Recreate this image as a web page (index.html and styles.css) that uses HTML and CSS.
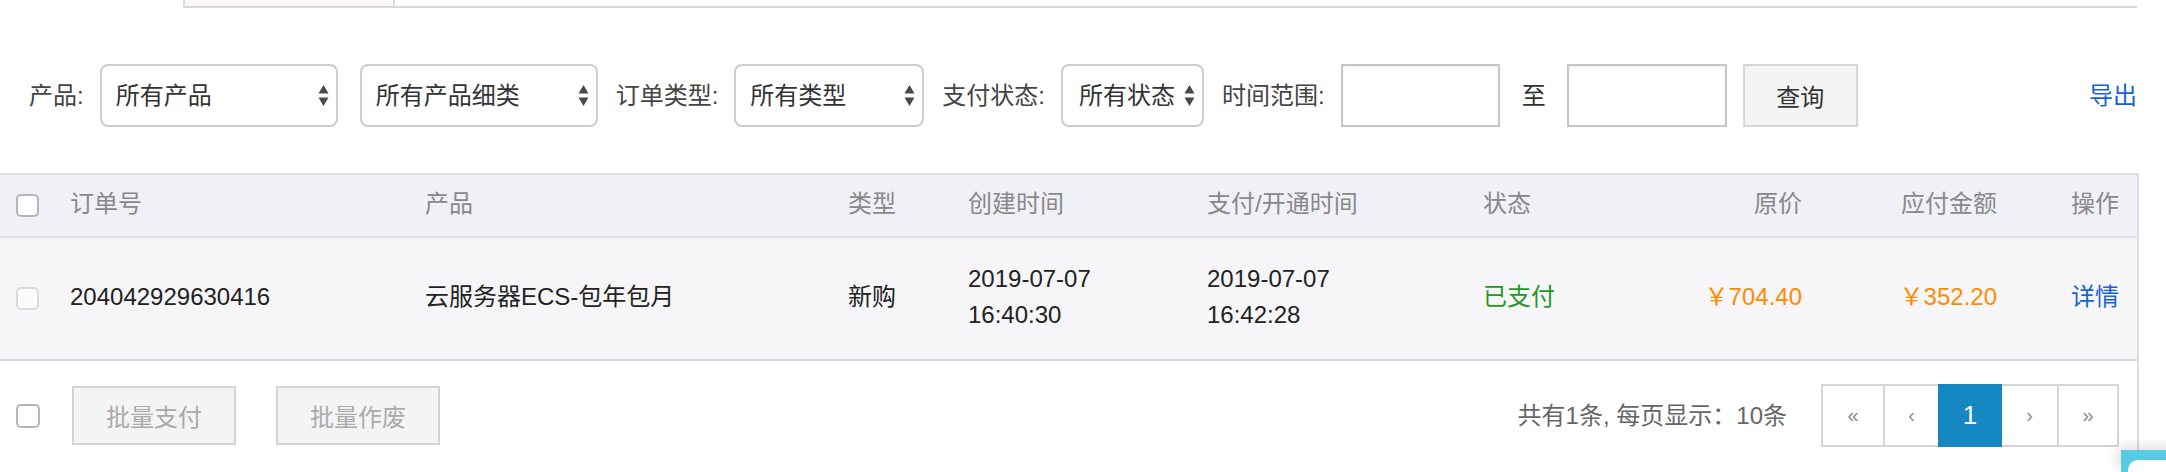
FILE: index.html
```html
<!DOCTYPE html>
<html lang="zh-CN">
<head>
<meta charset="utf-8">
<title>订单管理</title>
<link rel="stylesheet" href="styles.css">
</head>
<body>
<div class="topbox"><div class="topbox-cell"></div><div class="topbox-rest"></div></div>

<form class="filters">
  <span class="flabel">产品:</span>
  <div class="sel sel-product sel-first"><span>所有产品</span><svg class="arrows" viewBox="0 0 11 23" width="11" height="23"><path d="M5.5 1 L10.5 9.5 H0.5 Z M0.5 13.5 H10.5 L5.5 22 Z"/></svg></div>
  <div class="sel sel-product"><span>所有产品细类</span><svg class="arrows" viewBox="0 0 11 23" width="11" height="23"><path d="M5.5 1 L10.5 9.5 H0.5 Z M0.5 13.5 H10.5 L5.5 22 Z"/></svg></div>
  <span class="flabel">订单类型:</span>
  <div class="sel sel-type"><span>所有类型</span><svg class="arrows" viewBox="0 0 11 23" width="11" height="23"><path d="M5.5 1 L10.5 9.5 H0.5 Z M0.5 13.5 H10.5 L5.5 22 Z"/></svg></div>
  <span class="flabel">支付状态:</span>
  <div class="sel sel-status"><span>所有状态</span><svg class="arrows" viewBox="0 0 11 23" width="11" height="23"><path d="M5.5 1 L10.5 9.5 H0.5 Z M0.5 13.5 H10.5 L5.5 22 Z"/></svg></div>
  <span class="flabel">时间范围:</span>
  <input class="date date-from" type="text">
  <span class="to">至</span>
  <input class="date date-to" type="text">
  <button class="query" type="button">查询</button>
  <a class="export" href="#">导出</a>
</form>

<div class="panel">
  <table class="orders">
    <colgroup>
      <col class="c-check"><col class="c-id"><col class="c-prod"><col class="c-type"><col class="c-created"><col class="c-paid"><col class="c-status"><col class="c-price"><col class="c-pay"><col class="c-op">
    </colgroup>
    <thead>
      <tr>
        <th><span class="cb"></span></th>
        <th>订单号</th>
        <th>产品</th>
        <th>类型</th>
        <th>创建时间</th>
        <th>支付/开通时间</th>
        <th>状态</th>
        <th class="r">原价</th>
        <th class="r">应付金额</th>
        <th class="r op">操作</th>
      </tr>
    </thead>
    <tbody>
      <tr>
        <td><span class="cb cb-disabled"></span></td>
        <td>204042929630416</td>
        <td>云服务器ECS-包年包月</td>
        <td>新购</td>
        <td>2019-07-07<br>16:40:30</td>
        <td>2019-07-07<br>16:42:28</td>
        <td class="paid">已支付</td>
        <td class="r money">￥704.40</td>
        <td class="r money">￥352.20</td>
        <td class="r op"><a class="link" href="#">详情</a></td>
      </tr>
    </tbody>
  </table>

  <div class="footer">
    <span class="cb cb-foot"></span>
    <button class="bulk" type="button" disabled>批量支付</button>
    <button class="bulk bulk-second" type="button" disabled>批量作废</button>
    <span class="total">共有1条, 每页显示：10条</span>
    <ul class="pager">
      <li class="pg pg-first">«</li>
      <li class="pg pg-prev">‹</li>
      <li class="pg pg-active">1</li>
      <li class="pg pg-next">›</li>
      <li class="pg pg-last">»</li>
    </ul>
  </div>
</div>

<div class="helpdock"><div class="helpdock-icon"></div></div>
</body>
</html>
```

FILE: styles.css
```css
html, body {
  margin: 0;
  padding: 0;
  background: #fff;
}

body {
  font-family: "Liberation Sans", "Noto Sans CJK SC", sans-serif;
  font-size: 24px;
  color: #333;
  width: 2166px;
  height: 472px;
  overflow: hidden;
  position: relative;
}

/* remnant of the box above */
.topbox {
  display: flex;
  margin-left: 183px;
  width: 1954px;
  height: 8px;
  box-sizing: border-box;
  border-left: 2px solid #dadada;
  border-bottom: 2px solid #d8d8d8;
}
.topbox-cell {
  width: 208px;
  background: #faf9f6;
  border-right: 2px solid #dcdcdc;
}
.topbox-rest {
  flex: 1;
}

/* filter bar */
.filters {
  display: flex;
  align-items: center;
  height: 63px;
  margin: 56px 0 0;
  padding: 0 29px;
}
.flabel {
  color: #444;
  line-height: 30px;
  margin-right: 16px;
  white-space: nowrap;
}
.sel {
  display: flex;
  align-items: center;
  justify-content: space-between;
  box-sizing: border-box;
  height: 63px;
  border: 2px solid #cdcdcd;
  border-radius: 8px;
  background: #fff;
  padding: 0 7px 0 14px;
  margin-right: 18px;
  color: #333;
  line-height: 30px;
  white-space: nowrap;
}
.sel-first { margin-right: 22px; }
.sel-product { width: 238px; }
.sel-type { width: 190px; }
.sel-status { width: 143px; padding-left: 16px; }
.arrows { fill: #4a4a4a; flex: none; }

.date {
  box-sizing: border-box;
  height: 63px;
  border: 2px solid #c6c6c6;
  border-radius: 0;
  box-shadow: inset 0 1px 2px rgba(0, 0, 0, 0.08);
  background: #fff;
  padding: 0 8px;
  margin: 0;
  font: inherit;
}
.date-from { width: 159px; margin-right: 22px; }
.date-to { width: 160px; margin-right: 16px; }
.to {
  color: #333;
  line-height: 30px;
  margin-right: 21px;
}
.query {
  box-sizing: border-box;
  width: 115px;
  height: 63px;
  border: 2px solid #d6d6d6;
  background: #f4f4f4;
  color: #333;
  font: inherit;
  padding: 0;
  margin: 0;
}
.export {
  margin-left: auto;
  color: #1a62d4;
  text-decoration: none;
  line-height: 30px;
}

/* table panel */
.panel {
  margin-top: 46px;
  width: 2139px;
  box-sizing: border-box;
  border-right: 2px solid #dcdee4;
  padding-bottom: 25px;
}
.orders {
  width: 2137px;
  table-layout: fixed;
  border-collapse: separate;
  border-spacing: 0;
}
.c-check { width: 54px; }
.c-id { width: 355px; }
.c-prod { width: 423px; }
.c-type { width: 120px; }
.c-created { width: 239px; }
.c-paid { width: 276px; }
.c-status { width: 183px; }
.c-price { width: 168px; }
.c-pay { width: 195px; }
.c-op { width: 124px; }

.orders th {
  height: 65px;
  box-sizing: border-box;
  padding: 0 0 4px 16px;
  background: #f0f1f6;
  border-top: 2px solid #dcdee4;
  border-bottom: 2px solid #dcdfe5;
  font-weight: normal;
  color: #888;
  text-align: left;
  line-height: 30px;
  white-space: nowrap;
}
.orders td {
  height: 117px;
  padding: 0 0 4px 16px;
  background: #f6f6f9;
  border-bottom: 2px solid #d8d8d8;
  color: #222;
  line-height: 36px;
  vertical-align: middle;
  white-space: nowrap;
}
.orders .r {
  text-align: right;
  padding-left: 0;
  padding-right: 16px;
}
.orders .op { padding-right: 18px; }
.orders .paid { color: #1f9a1f; }
.orders .money { color: #ff8a00; }
.link {
  color: #1a62d4;
  text-decoration: none;
}

.cb {
  display: inline-block;
  box-sizing: border-box;
  width: 23px;
  height: 23px;
  border: 2px solid #b5b5b5;
  border-radius: 5px;
  background: #fff;
  vertical-align: middle;
}
.cb-disabled {
  border-color: #dadada;
  background: #fbfbfb;
}

/* footer */
.footer {
  display: flex;
  align-items: center;
  height: 63px;
  padding: 23px 18px 0 16px;
}
.cb-foot {
  width: 24px;
  height: 24px;
  margin-right: 32px;
}
.bulk {
  box-sizing: border-box;
  width: 164px;
  height: 59px;
  border: 2px solid #d4d4d4;
  background: #f4f4f4;
  color: #aaa;
  font: inherit;
  padding: 0;
  margin: 0;
}
.bulk-second { margin-left: 40px; }
.total {
  margin-left: auto;
  margin-right: 34px;
  color: #666;
  line-height: 30px;
  white-space: nowrap;
}
.pager {
  display: flex;
  list-style: none;
  margin: 0;
  padding: 0;
  height: 63px;
}
.pg {
  box-sizing: border-box;
  height: 63px;
  border: 2px solid #d6d6d6;
  margin-left: -2px;
  display: flex;
  align-items: center;
  justify-content: center;
  color: #8a8a8a;
  font-size: 20px;
  background: #fff;
}
.pg-first { width: 64px; margin-left: 0; }
.pg-prev { width: 57px; }
.pg-active {
  width: 64px;
  background: #1587c3;
  border-color: #1587c3;
  color: #fff;
  font-size: 26px;
  position: relative;
  z-index: 1;
}
.pg-next { width: 59px; }
.pg-last { width: 62px; }

/* floating help dock in the corner */
.helpdock {
  position: absolute;
  left: 2121px;
  top: 450px;
  width: 60px;
  height: 22px;
  overflow: hidden;
  background: #56cbe2;
  box-shadow: -4px -4px 12px rgba(0, 0, 0, 0.12);
}
.helpdock-icon {
  position: absolute;
  left: 7px;
  top: 10px;
  width: 50px;
  height: 40px;
  background: #fff;
  border-radius: 10px 10px 0 0;
}
```
